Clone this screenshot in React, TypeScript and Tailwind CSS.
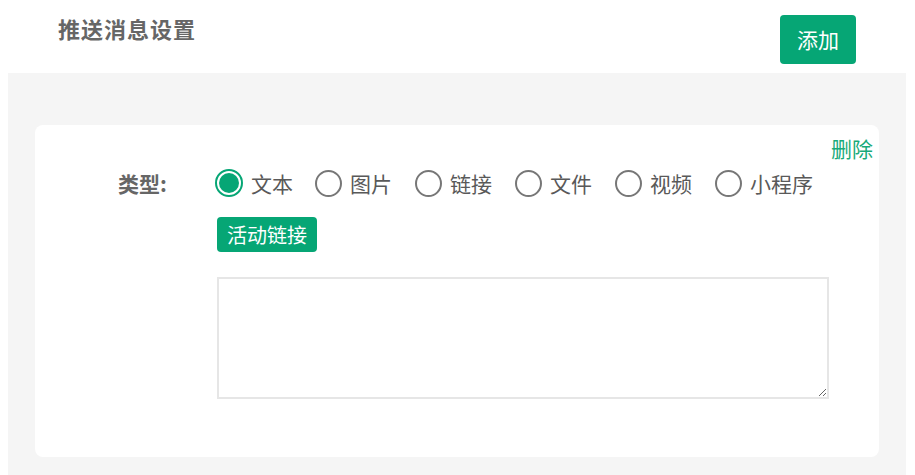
import React, { useState } from 'react';

const types = ['文本', '图片', '链接', '文件', '视频', '小程序'];

function Radio({ label, checked, onClick }: { label: string; checked: boolean; onClick: () => void }) {
    return (
        <button type="button" onClick={onClick} className="flex items-center w-[100px] shrink-0 text-left">
            {checked ? (
                <span className="w-[28px] h-[28px] rounded-full border-[2px] border-[#06a675] flex items-center justify-center shrink-0">
                    <span className="w-[20px] h-[20px] rounded-full bg-[#06a675]" />
                </span>
            ) : (
                <span className="w-[27px] h-[27px] rounded-full border-[2px] border-[#777777] shrink-0" />
            )}
            <span className="ml-[8px] text-[21px] leading-[28px] text-[#595959] whitespace-nowrap">{label}</span>
        </button>
    );
}

export default function App() {
    const [active, setActive] = useState(0);

    return (
        <div className="w-[915px] h-[475px] bg-white overflow-hidden" style={{ fontFamily: '"Noto Sans CJK SC", "Noto Sans", sans-serif' }}>
            {/* header */}
            <div className="h-[73px] flex items-start justify-between pl-[58px] pr-[59px]">
                <h1 className="mt-[13px] text-[22px] leading-[30px] font-bold text-[#666666] tracking-[1px]">推送消息设置</h1>
                <button className="mt-[15px] w-[76px] h-[49px] rounded-[4px] bg-[#06a675] text-white text-[21px]">添加</button>
            </div>

            {/* body */}
            <div className="mx-[8px] mr-[9px] h-[402px] bg-[#f5f5f5] pt-[52px] px-[27px]">
                <div className="h-[332px] bg-white rounded-[8px] pt-[9px] pr-[6px]">
                    <div className="flex justify-end h-[28px]">
                        <button className="text-[21px] leading-[28px] text-[#18aa79]">删除</button>
                    </div>
                    <div className="mt-[7px] flex items-center h-[28px]">
                        <span className="ml-[83px] w-[97px] shrink-0 text-[21px] leading-[28px] font-bold text-[#666666]">类型:</span>
                        <div className="flex items-center">
                            {types.map((t, i) => (
                                <Radio key={t} label={t} checked={active === i} onClick={() => setActive(i)} />
                            ))}
                        </div>
                    </div>
                    <div className="ml-[182px] mt-[20px] flex flex-col items-start">
                        <button className="h-[35px] px-[10px] rounded-[4px] bg-[#06a675] text-white text-[20px] leading-[35px]">活动链接</button>
                        <textarea className="mt-[25px] w-[612px] h-[122px] border-[2px] border-[#e6e6e6] outline-none p-2 text-[16px]" />
                    </div>
                </div>
            </div>
        </div>
    );
}
